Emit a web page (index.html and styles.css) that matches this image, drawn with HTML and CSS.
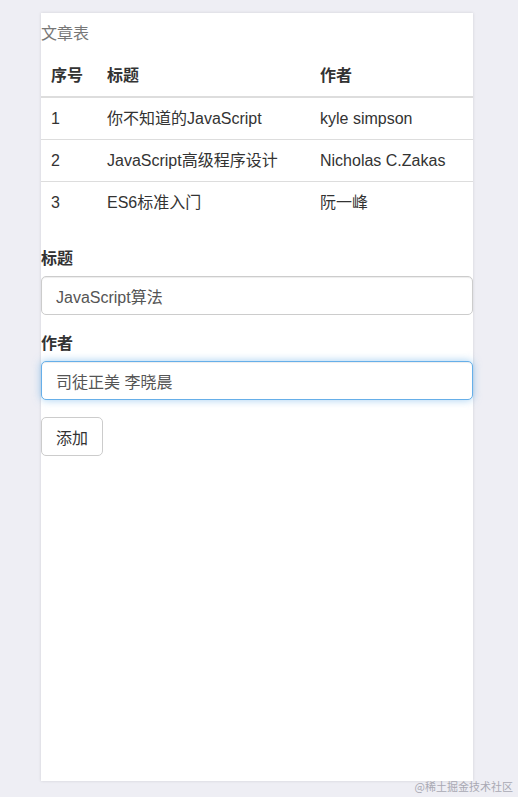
FILE: index.html
```html
<!DOCTYPE html>
<html lang="zh-CN">
<head>
<meta charset="utf-8">
<title>文章表</title>
<link rel="stylesheet" href="styles.css">
</head>
<body>
<div class="card">
  <table class="table">
    <caption>文章表</caption>
    <thead>
      <tr><th class="c1">序号</th><th class="c2">标题</th><th class="c3">作者</th></tr>
    </thead>
    <tbody>
      <tr><td>1</td><td>你不知道的JavaScript</td><td>kyle simpson</td></tr>
      <tr><td>2</td><td>JavaScript高级程序设计</td><td>Nicholas C.Zakas</td></tr>
      <tr><td>3</td><td>ES6标准入门</td><td>阮一峰</td></tr>
    </tbody>
  </table>
  <form class="form">
    <div class="form-group">
      <label class="label" for="title">标题</label>
      <input class="input" id="title" type="text" value="JavaScript算法">
    </div>
    <div class="form-group">
      <label class="label" for="author">作者</label>
      <input class="input focused" id="author" type="text" value="司徒正美 李晓晨">
    </div>
    <button class="btn" type="button">添加</button>
  </form>
</div>
<div class="watermark">@稀土掘金技术社区</div>
</body>
</html>
```
FILE: styles.css
```css
html, body {
  margin: 0;
  padding: 0;
  background: #eeeef4;
}
body {
  width: 518px;
  height: 797px;
  position: relative;
  overflow: hidden;
  font-family: "Liberation Sans", Arial, "Noto Sans CJK SC", sans-serif;
  font-size: 16px;
  color: #333;
}
.card {
  margin: 13px 0 0 41px;
  width: 432px;
  height: 768px;
  background: #fff;
  box-shadow: 0 0 3px rgba(0, 0, 0, 0.12);
}
.table {
  width: 100%;
  border-collapse: collapse;
  border-spacing: 0;
  margin-bottom: 24px;
}
caption {
  text-align: left;
  color: #777;
  padding: 9px 0;
  line-height: 23px;
}
th, td {
  text-align: left;
  padding: 9px 10px;
  line-height: 23px;
  vertical-align: top;
}
th {
  font-weight: bold;
  padding-top: 10px;
  padding-bottom: 9px;
  border-bottom: 2px solid #ddd;
}
tbody tr + tr td {
  border-top: 1px solid #ddd;
}
.c1 { width: 36px; }
.c2 { width: 193px; }
.form-group {
  margin-bottom: 17px;
}
.label {
  display: block;
  font-weight: bold;
  line-height: 23px;
  margin-bottom: 6px;
}
.input {
  display: block;
  box-sizing: border-box;
  width: 100%;
  height: 39px;
  padding: 7px 14px;
  font-family: inherit;
  font-size: 16px;
  color: #555;
  background: #fff;
  border: 1px solid #ccc;
  border-radius: 5px;
  box-shadow: inset 0 1px 1px rgba(0, 0, 0, 0.075);
  outline: none;
}
.input.focused {
  border-color: #66afe9;
  box-shadow: inset 0 1px 1px rgba(0, 0, 0, 0.075), 0 0 8px rgba(102, 175, 233, 0.6);
}
.btn {
  box-sizing: border-box;
  height: 39px;
  padding: 7px 14px;
  font-family: inherit;
  font-size: 16px;
  color: #333;
  background: #fff;
  border: 1px solid #ccc;
  border-radius: 5px;
}
.watermark {
  position: absolute;
  right: 5px;
  bottom: 3px;
  font-family: "Noto Sans CJK SC", sans-serif;
  font-size: 11px;
  color: #a9a9b3;
}
```
